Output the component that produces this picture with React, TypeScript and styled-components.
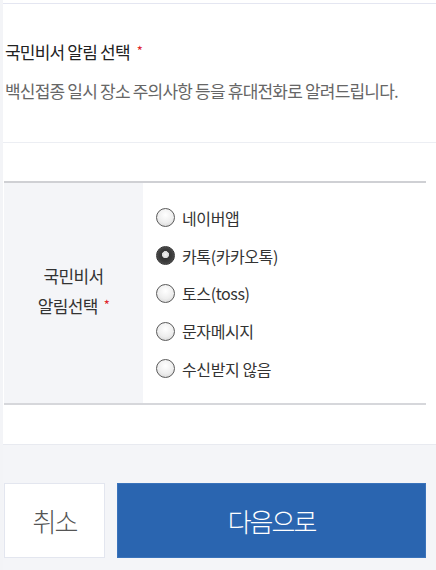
import { useState } from 'react';
import styled, { createGlobalStyle, css } from 'styled-components';

const options = ['네이버앱', '카톡(카카오톡)', '토스(toss)', '문자메시지', '수신받지 않음'];

export default function App() {
  const [selected, setSelected] = useState(1);

  return (
    <>
      <GlobalStyle />
      <Page>
        <Intro>
          <Title>
            국민비서 알림 선택<Required>*</Required>
          </Title>
          <Description>백신접종 일시 장소 주의사항 등을 휴대전화로 알려드립니다.</Description>
        </Intro>

        <FormTable>
          <LabelCell>
            <span>국민비서</span>
            <span>
              알림선택<Required>*</Required>
            </span>
          </LabelCell>
          <OptionList>
            {options.map((label, i) => (
              <OptionRow key={label} onClick={() => setSelected(i)}>
                <Radio $checked={selected === i} />
                {label}
              </OptionRow>
            ))}
          </OptionList>
        </FormTable>

        <Footer>
          <CancelButton>취소</CancelButton>
          <NextButton>다음으로</NextButton>
        </Footer>
      </Page>
    </>
  );
}

const GlobalStyle = createGlobalStyle`
  html, body {
    margin: 0;
    padding: 0;
    background: #f3f4f7;
    font-family: "Noto Sans CJK KR", "Noto Sans", sans-serif;
  }
`;

const Page = styled.div`
  width: 433px;
  height: 570px;
  margin-left: 3px;
  display: flex;
  flex-direction: column;
  background: #fff;
`;

const Intro = styled.section`
  margin-top: 3px;
  padding: 36px 0 39px 2px;
  border-top: 1px solid #e4e6f1;
  border-bottom: 1px solid #eceef3;
  display: flex;
  flex-direction: column;
  gap: 13px;
`;

const Title = styled.h2`
  margin: 0;
  font-size: 17px;
  line-height: 24px;
  font-weight: 400;
  letter-spacing: -0.8px;
  color: #222;
`;

const Required = styled.em`
  font-style: normal;
  color: #e0262c;
  font-size: 13px;
  margin-left: 7px;
  position: relative;
  top: -3px;
`;

const Description = styled.p`
  margin: 0;
  font-size: 17px;
  line-height: 24px;
  letter-spacing: -0.8px;
  color: #666;
`;

const FormTable = styled.div`
  margin: 38px 10px 0 1px;
  display: grid;
  grid-template-columns: 139px 1fr;
  border-top: 2px solid #cfd0d4;
  border-bottom: 2px solid #d6d7db;
`;

const LabelCell = styled.div`
  background: #f4f5f8;
  display: flex;
  flex-direction: column;
  align-items: center;
  justify-content: center;
  padding-bottom: 2px;
  font-size: 17px;
  line-height: 30px;
  letter-spacing: -0.6px;
  color: #333;

  span {
    display: block;
  }

  ${Required} {
    margin-left: 6px;
  }
`;

const OptionList = styled.div`
  padding: 16px 0 15px 13px;
  display: flex;
  flex-direction: column;
`;

const OptionRow = styled.label`
  height: 37.75px;
  display: flex;
  align-items: center;
  gap: 7px;
  font-size: 16px;
  letter-spacing: -0.4px;
  color: #333;
  cursor: pointer;
`;

const Radio = styled.span<{ $checked: boolean }>`
  flex: none;
  width: 19px;
  height: 19px;
  box-sizing: border-box;
  border-radius: 50%;
  border: 1.5px solid #5a5a5a;
  background: radial-gradient(circle at 50% 35%, #ffffff 0%, #eeeeee 55%, #cfcfcf 100%);

  ${({ $checked }) =>
    $checked &&
    css`
      border: 1px solid #333;
      background:
        radial-gradient(circle at 50% 45%, #f4f4f4 0%, #d8d8d8 26%, transparent 30%),
        radial-gradient(circle, #2a2a2a 0%, #3c3c3c 55%, #6a6a6a 100%);
    `}
`;

const Footer = styled.div`
  flex: 1;
  margin-top: 39px;
  padding: 38px 10px 12px 1px;
  background: #f4f5f8;
  border-top: 1px solid #e8eaf0;
  display: grid;
  grid-template-columns: 101px 1fr;
  gap: 12px;
`;

const buttonBase = css`
  height: 75px;
  margin: 0;
  font-family: "Noto Sans CJK KR", "Noto Sans", sans-serif;
  font-size: 26px;
  font-weight: 300;
  letter-spacing: -2px;
  cursor: pointer;
`;

const CancelButton = styled.button`
  ${buttonBase}
  background: #fff;
  border: 1px solid #e3e6ef;
  color: #555;
`;

const NextButton = styled.button`
  ${buttonBase}
  background: #2a65b0;
  border: 1px solid #3a73bb;
  color: #fff;
`;
